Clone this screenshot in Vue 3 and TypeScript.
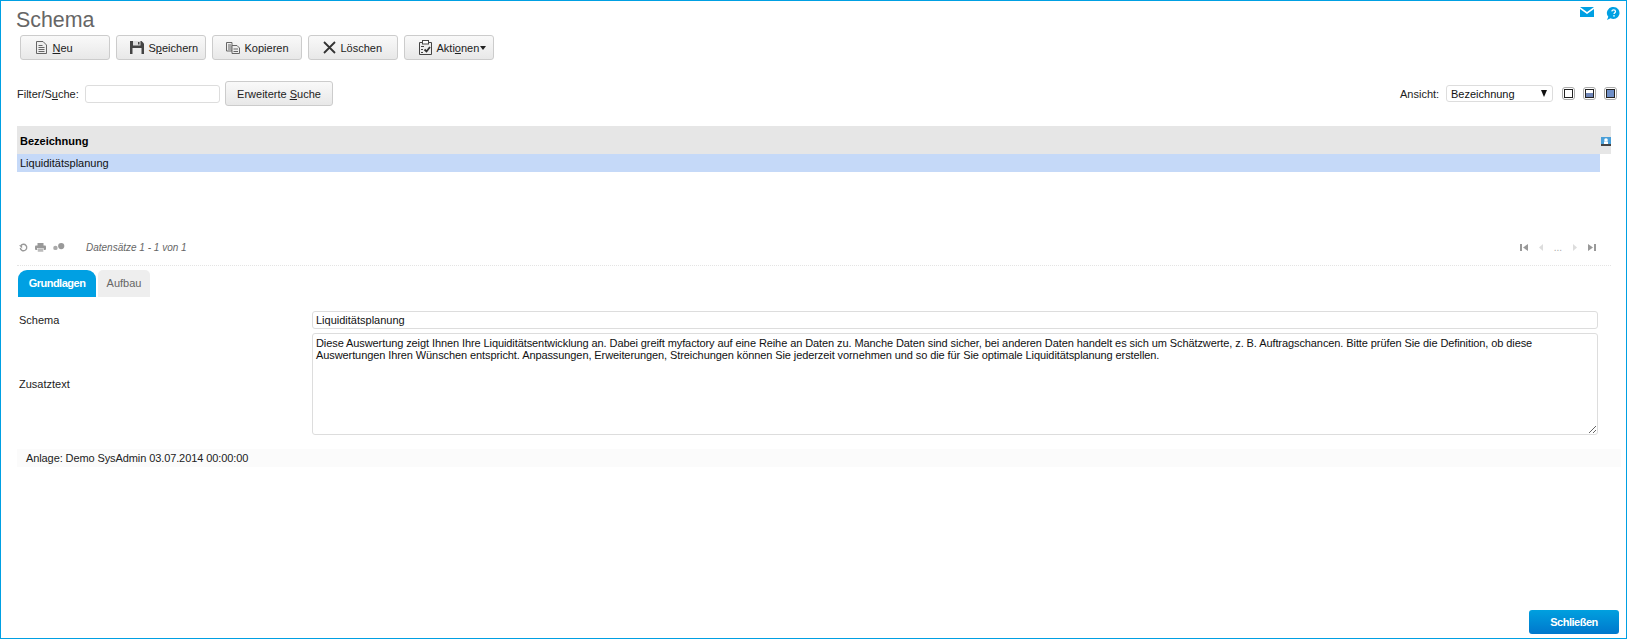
<script setup lang="ts">
const text = 'Diese Auswertung zeigt Ihnen Ihre Liquiditätsentwicklung an. Dabei greift myfactory auf eine Reihe an Daten zu. Manche Daten sind sicher, bei anderen Daten handelt es sich um Schätzwerte, z. B. Auftragschancen. Bitte prüfen Sie die Definition, ob diese Auswertungen Ihren Wünschen entspricht. Anpassungen, Erweiterungen, Streichungen können Sie jederzeit vornehmen und so die für Sie optimale Liquiditätsplanung erstellen.'
</script>

<template>
  <div class="page">
    <header class="head">
      <h1 class="title">Schema</h1>
      <div class="top-icons">
        <svg width="14" height="10" viewBox="0 0 14 10"><path d="M0 0h14L7 5z" fill="#00a0e3"/><path d="M0 2l7 5 7-5v8H0z" fill="#00a0e3"/></svg>
        <svg width="14" height="13" viewBox="0 0 14 13"><path d="M7.500 0a6 6 0 1 1-3 11.200L1 13l1.300-3.200A6 6 0 0 1 7.500 0z" fill="#00a0e3"/><path d="M5.800 4.300c.3-1.900 3.700-1.900 3.700.1 0 1.300-1.500 1.400-1.500 2.700" fill="none" stroke="#fff" stroke-width="1.300"/><rect x="7.300" y="8.100" width="1.400" height="1.500" fill="#fff"/></svg>
      </div>
    </header>

    <div class="toolbar">
      <button class="btn tb">
        <span class="ic"><svg width="11" height="13" viewBox="0 0 11 13"><path d="M.5 .5h6.500l3.500 3.500v8.500H.5z" fill="#eee" stroke="#666"/><path d="M2.500 4.500h4M2.500 6.500h6M2.500 8.500h6M2.500 10.500h6" stroke="#666"/></svg></span>
        <span><u>N</u>eu</span>
      </button>
      <button class="btn tb">
        <span class="ic"><svg width="14" height="13" viewBox="0 0 14 13"><path d="M0 0h11.500L14 2.500V13H0z" fill="#444"/><rect x="3" y="0" width="7.500" height="4.500" fill="#ddd"/><rect x="8" y="1" width="1.500" height="2.500" fill="#444"/><rect x="2.500" y="7" width="9" height="6" fill="#eee"/></svg></span>
        <span>S<u>p</u>eichern</span>
      </button>
      <button class="btn tb">
        <span class="ic"><svg width="14" height="12" viewBox="0 0 14 12"><path d="M.5 .5h5.500v8.500H.5z" fill="#eee" stroke="#666"/><path d="M6 3.500h5l2.500 2.500v5.500H6z" fill="#eee" stroke="#666"/><path d="M2 3h3M2 5h3M2 7h3M7.500 7h4.500M7.500 9.500h4.500" stroke="#666"/></svg></span>
        <span>Kopieren</span>
      </button>
      <button class="btn tb">
        <span class="ic"><svg width="13" height="13" viewBox="0 0 13 13"><path d="M1 1l11 11M12 1L1 12" stroke="#333" stroke-width="1.800"/></svg></span>
        <span>Löschen</span>
      </button>
      <button class="btn tb">
        <span class="ic"><svg width="13" height="15" viewBox="0 0 13 15"><path d="M.5 2.500h12v12H.5z" fill="#eee" stroke="#444"/><rect x="3.500" y="0.500" width="6" height="3.500" fill="#fff" stroke="#444"/><path d="M2 6.500h3M2 9.500h2M2 12.500h2" stroke="#444"/><path d="M5.500 9.500l2 2 3.500-4.500" fill="none" stroke="#333" stroke-width="1.800"/></svg></span>
        <span>Akti<u>o</u>nen</span><i class="caret"></i>
      </button>
    </div>

    <div class="filter">
      <label class="flabel">Filter/S<u>u</u>che:</label>
      <input class="finput" type="text" />
      <button class="btn search">Erweiterte <u>S</u>uche</button>
      <div class="view">
        <span class="vlabel">Ansicht:</span>
        <div class="select"><span>Bezeichnung</span><i class="arrow"></i></div>
        <span class="vbox"><i class="fill"></i></span>
        <span class="vbox"><i class="fill half"></i></span>
        <span class="vbox"><i class="fill full"></i></span>
      </div>
    </div>

    <div class="grid">
      <div class="ghead">
        <span>Bezeichnung</span>
        <svg width="10" height="9" viewBox="0 0 10 9"><rect width="10" height="7.500" fill="#4a9fd8"/><circle cx="5" cy="3" r="1.800" fill="#fff"/><rect x="3" y="4.500" width="4" height="3" fill="#fff"/><rect y="7" width="10" height="2" fill="#444"/></svg>
      </div>
      <div class="grow">Liquiditätsplanung</div>
    </div>

    <div class="pager">
      <svg width="9" height="9" viewBox="0 0 10 10"><path d="M2 3a3.600 3.600 0 1 1-.6 2.500" fill="none" stroke="#999" stroke-width="1.500"/><path d="M0 2.500h3.500V6z" fill="#999"/></svg>
      <svg width="11" height="9" viewBox="0 0 11 9"><rect x="2.500" width="6" height="3" fill="#999"/><rect y="2.500" width="11" height="4.500" rx="1" fill="#999"/><rect x="2.500" y="5.500" width="6" height="3.500" fill="#bbb" stroke="#fff" stroke-width=".5"/></svg>
      <svg width="12" height="8" viewBox="0 0 13 9"><circle cx="2.500" cy="5.500" r="2.500" fill="#aaa"/><circle cx="9" cy="3.500" r="3.500" fill="#999"/></svg>
      <span class="records">Datensätze 1 - 1 von 1</span>
      <div class="nav">
        <svg width="8" height="7" viewBox="0 0 8 7"><path d="M0 0h2v7H0zM8 0v7L3 3.500z" fill="#999"/></svg>
        <svg width="4" height="7" viewBox="0 0 4 7"><path d="M4 0v7L0 3.500z" fill="#ddd"/></svg>
        <span class="dots">...</span>
        <svg width="4" height="7" viewBox="0 0 4 7"><path d="M0 0v7l4-3.500z" fill="#ddd"/></svg>
        <svg width="8" height="7" viewBox="0 0 8 7"><path d="M0 0v7l5-3.500zM6 0h2v7H6z" fill="#999"/></svg>
      </div>
    </div>

    <nav class="tabs">
      <span class="tab active">Grundlagen</span>
      <span class="tab">Aufbau</span>
    </nav>

    <div class="form">
      <label class="lab">Schema</label>
      <input class="field" type="text" value="Liquiditätsplanung" />
      <label class="lab">Zusatztext</label>
      <textarea class="area" :value="text"></textarea>
    </div>

    <div class="audit">Anlage: Demo SysAdmin 03.07.2014 00:00:00</div>

    <footer class="foot">
      <button class="close">Schließen</button>
    </footer>
  </div>
</template>

<style>
html, body { margin: 0; background: #fff; }
</style>

<style scoped>
.page {
  box-sizing: border-box;
  width: 1627px;
  height: 639px;
  border: 1px solid #00a0e3;
  padding-left: 1px;
  display: flex;
  flex-direction: column;
  font-family: "Liberation Sans", Arial, sans-serif;
  font-size: 11px;
  color: #222;
  overflow: hidden;
}
.head {
  display: flex;
  justify-content: space-between;
  height: 34px;
  padding: 0 6px 0 14px;
}
.title {
  margin: 5px 0 0;
  font-size: 21.400px;
  line-height: 28px;
  font-weight: 400;
  color: #666;
}
.top-icons {
  display: flex;
  gap: 12px;
  align-items: flex-start;
  padding-top: 6px;
}
.btn {
  box-sizing: border-box;
  border: 1px solid #ccc;
  border-radius: 3px;
  background: linear-gradient(#f9f9f9, #e8e8e8);
  font: inherit;
  color: #222;
  padding: 0;
}
.toolbar {
  display: flex;
  gap: 6px;
  padding-left: 18px;
}
.tb {
  width: 90px;
  height: 25px;
  display: flex;
  align-items: center;
  padding-left: 13px;
}
.ic {
  width: 14px;
  margin-right: 4.500px;
  display: flex;
  justify-content: center;
}
.caret {
  width: 0;
  height: 0;
  border: 3.500px solid transparent;
  border-top: 4px solid #222;
  border-bottom: 0;
  margin-left: 1px;
}
.filter {
  display: flex;
  align-items: center;
  height: 25px;
  margin-top: 21px;
  padding-left: 15px;
}
.flabel { width: 68px; }
.finput {
  box-sizing: border-box;
  width: 135px;
  height: 18px;
  border: 1px solid #ddd;
  border-radius: 3px;
  padding: 0 4px;
  outline: none;
}
.search {
  width: 108px;
  height: 25px;
  margin-left: 5px;
}
.view {
  margin-left: auto;
  display: flex;
  align-items: center;
  padding-right: 9px;
}
.vlabel { width: 46px; }
.select {
  box-sizing: border-box;
  width: 107px;
  height: 17px;
  border: 1px solid #ddd;
  border-radius: 3px;
  padding: 0 4px;
  display: flex;
  justify-content: space-between;
  align-items: center;
  margin-right: 9px;
  color: #111;
}
.arrow {
  width: 0;
  height: 0;
  border: 3px solid transparent;
  border-top: 7px solid #111;
  border-bottom: 0;
  margin-right: 1px;
}
.vbox {
  box-sizing: border-box;
  width: 13px;
  height: 13px;
  border: 1px solid #aaa;
  border-radius: 3px;
  padding: 1px;
  margin-right: 8px;
  display: flex;
}
.vbox:last-child { margin-right: 0; }
.fill { flex: 1; border: 1px solid #222; }
.half { background: linear-gradient(#fff 50%, #6f86b8 50%); }
.full { background: #6f8fc8; }
.grid {
  margin-top: 20px;
  padding-left: 15px;
  padding-right: 15px;
}
.ghead {
  box-sizing: border-box;
  height: 28px;
  padding: 2px 0 0 3px;
  background: #e6e6e6;
  display: flex;
  align-items: center;
  justify-content: space-between;
  font-weight: 700;
  color: #000;
}
.grow {
  height: 18px;
  line-height: 18px;
  margin-right: 11px;
  padding-left: 3px;
  background: #c5d9f8;
  color: #111;
}
.pager {
  display: flex;
  align-items: center;
  height: 16px;
  margin-top: 67px;
  padding: 0 30px 0 17px;
  gap: 7px;
  color: #777;
}
.records {
  margin-left: 14px;
  font-size: 10px;
  font-style: italic;
  color: #666;
}
.nav {
  margin-left: auto;
  display: flex;
  align-items: center;
  gap: 11px;
}
.dots { font-size: 10px; color: #aaa; }
.tabs {
  display: flex;
  gap: 2px;
  margin-top: 10px;
  padding-top: 4px;
  margin-left: 15px;
  margin-right: 15px;
  border-top: 1px dotted #e4e4e4;
}
.tab {
  height: 27px;
  line-height: 27px;
  width: 52px;
  text-align: center;
  background: #eee;
  color: #666;
  border-radius: 5px 5px 0 0;
}
.tab.active {
  width: 78px;
  margin-left: 1px;
  background: #00a0e3;
  color: #fff;
  font-weight: 700;
  letter-spacing: -.5px;
  border-top-right-radius: 9px;
  border-top-left-radius: 9px;
}
.form {
  display: grid;
  grid-template-columns: 293px 1286px;
  row-gap: 4px;
  margin-top: 14px;
  padding-left: 17px;
  align-items: center;
}
.lab { color: #222; }
.field {
  box-sizing: border-box;
  height: 18px;
  width: 100%;
  border: 1px solid #ddd;
  border-radius: 3px;
  padding: 0 3px;
  font: inherit;
  color: #111;
  outline: none;
}
.area {
  box-sizing: border-box;
  display: block;
  height: 102px;
  width: 100%;
  margin: 0;
  border: 1px solid #ddd;
  border-radius: 3px;
  padding: 3px 3px 2px;
  font: inherit;
  line-height: 12px;
  letter-spacing: -.09px;
  color: #111;
  outline: none;
}
.audit {
  height: 18px;
  line-height: 18px;
  margin: 14px 5px 0 15px;
  padding-left: 9px;
  background: #fbfbfb;
  color: #222;
  letter-spacing: -.1px;
}
.foot {
  margin-top: auto;
  display: flex;
  justify-content: flex-end;
  padding: 0 7px 4px 0;
}
.close {
  width: 90px;
  height: 24px;
  border: 0;
  border-radius: 3px;
  background: linear-gradient(#00a0df, #0077cc);
  color: #fff;
  font: inherit;
  font-weight: 700;
  letter-spacing: -.5px;
  padding: 0;
}
</style>
